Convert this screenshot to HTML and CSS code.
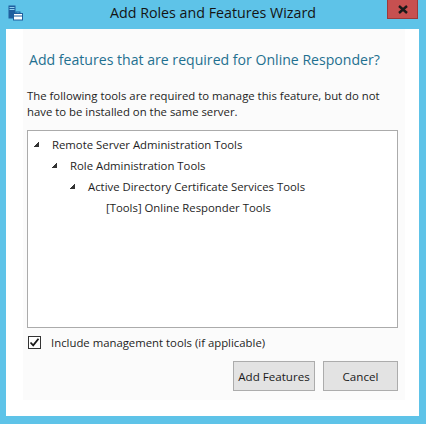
FILE: index.html
```html
<!DOCTYPE html>
<html>
<head>
<meta charset="utf-8">
<link rel="stylesheet" href="styles.css">
</head>
<body>
<div class="window">
  <div class="titlebar">
    <svg class="app-icon" width="16" height="16" viewBox="0 0 16 16">
      <rect x="0.5" y="0.5" width="7" height="13" fill="#1f5f9e"/>
      <rect x="1.5" y="2" width="5" height="1" fill="#8fd0ef"/>
      <rect x="1.5" y="4" width="5" height="1" fill="#8fd0ef"/>
      <rect x="5.5" y="8.5" width="9" height="6.5" fill="#ffffff" stroke="#1f5f9e"/>
      <rect x="8" y="7" width="4" height="1.5" fill="none" stroke="#1f5f9e" stroke-width="1"/>
      <line x1="5.5" y1="11" x2="14.5" y2="11" stroke="#1f5f9e"/>
    </svg>
    <div class="title">Add Roles and Features Wizard</div>
    <div class="close">
      <svg width="10" height="9" viewBox="0 0 10 9"><path d="M1 1 L9 8 M9 1 L1 8" stroke="#1a1a1a" stroke-width="2.4"/></svg>
    </div>
  </div>
  <div class="client">
    <div class="panel">
      <h1 class="heading">Add features that are required for Online Responder?</h1>
      <p class="desc">The following tools are required to manage this feature, but do not have to be installed on the same server.</p>
      <div class="tree">
        <div class="row lvl0"><span class="tri"></span><span>Remote Server Administration Tools</span></div>
        <div class="row lvl1"><span class="tri"></span><span>Role Administration Tools</span></div>
        <div class="row lvl2"><span class="tri"></span><span>Active Directory Certificate Services Tools</span></div>
        <div class="row lvl3"><span class="tri none"></span><span>[Tools] Online Responder Tools</span></div>
      </div>
      <label class="check-row">
        <span class="checkbox">
          <svg width="11" height="11" viewBox="0 0 11 11"><path d="M1.5 5.5 L4.2 8.3 L9.5 1.8" fill="none" stroke="#1a1a1a" stroke-width="1.8"/></svg>
        </span>
        <span>Include management tools (if applicable)</span>
      </label>
      <div class="buttons">
        <button class="btn add">Add Features</button>
        <button class="btn cancel">Cancel</button>
      </div>
    </div>
  </div>
</div>
</body>
</html>
```

FILE: styles.css
```css
* { box-sizing: border-box; }
html, body { margin: 0; padding: 0; }
body {
  width: 426px;
  height: 424px;
  background: #5ec3e8;
  font-family: "Open Sans", "Noto Sans", sans-serif;
  overflow: hidden;
}
.window {
  width: 426px;
  height: 424px;
  background: #5ec3e8;
  display: flex;
  flex-direction: column;
}
.titlebar {
  height: 29px;
  position: relative;
  display: flex;
  align-items: flex-start;
}
.app-icon {
  position: absolute;
  left: 8px;
  top: 5px;
}
.title {
  width: 100%;
  text-align: center;
  font-size: 14.25px;
  line-height: 26px;
  color: #141414;
}
.close {
  position: absolute;
  left: 387px;
  top: 0;
  width: 31px;
  height: 19px;
  background: #c75050;
  border: 1px solid #9c3a3a;
  border-top: none;
  display: flex;
  align-items: center;
  justify-content: center;
}
.client {
  margin: 0 7px 0 6px;
  height: 387px;
  background: #ffffff;
  padding: 0 14px 16px 17px;
}
.panel {
  height: 100%;
  background: #fbfbfb;
  padding: 21px 7px 9px 4px;
  display: flex;
  flex-direction: column;
}
.heading {
  margin: 0;
  font-weight: normal;
  font-size: 14.1px;
  line-height: 20px;
  color: #1f7090;
  padding-left: 2px;
  white-space: nowrap;
}
.desc {
  margin: 18px 0 0 0;
  font-size: 11.35px;
  line-height: 16px;
  color: #1e1e1e;
}
.tree {
  margin-top: 10px;
  height: 198px;
  background: #ffffff;
  border: 1px solid #ababab;
  padding-top: 3px;
}
.row {
  display: flex;
  align-items: center;
  height: 21px;
  font-size: 11.35px;
  color: #1e1e1e;
  white-space: nowrap;
}
.lvl0 { padding-left: 6px; }
.lvl1 { padding-left: 24px; }
.lvl2 { padding-left: 42px; }
.lvl3 { padding-left: 60px; }
.tri {
  width: 5px;
  height: 5px;
  margin-right: 13px;
  background: linear-gradient(to bottom right, transparent 49%, #333 50%);
}
.tri.none { background: none; }
.check-row {
  margin-top: 6px;
  display: flex;
  align-items: center;
  height: 16px;
  font-size: 11.35px;
  color: #1e1e1e;
}
.checkbox {
  width: 13px;
  height: 13px;
  border: 1px solid #333;
  background: #fff;
  margin: 0 10px 0 1px;
  display: flex;
  align-items: center;
  justify-content: center;
}
.buttons {
  margin-top: 11px;
  display: flex;
  justify-content: flex-end;
  gap: 8px;
}
.btn {
  height: 30px;
  background: #e3e3e3;
  border: 1px solid #acacac;
  font-family: inherit;
  font-size: 11.6px;
  color: #1a1a1a;
  padding: 0;
}
.add { width: 82px; }
.cancel { width: 75px; }
```
